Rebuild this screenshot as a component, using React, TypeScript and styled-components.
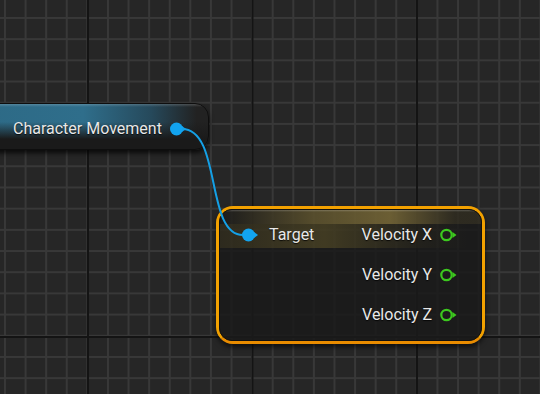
import styled, { createGlobalStyle } from "styled-components";

const GlobalStyle = createGlobalStyle`
  html, body {
    margin: 0;
    padding: 0;
    background: #262626;
  }
  body {
    font-family: Roboto, "Open Sans", "Liberation Sans", sans-serif;
  }
`;

// graph canvas with the minor / major grid lines
const Canvas = styled.div`
  position: relative;
  width: 540px;
  height: 394px;
  overflow: hidden;
  background-color: #262626;
  background-image:
    linear-gradient(to right, #141414 2px, transparent 2px),
    linear-gradient(to bottom, #141414 2px, transparent 2px),
    linear-gradient(to right, #383838 2px, transparent 2px),
    linear-gradient(to bottom, #383838 2px, transparent 2px);
  background-size: 164.5px 100%, 100% 1000px, 20.6px 100%, 100% 21.2px;
  background-position: 87px 0, 0 336px, 4px 0, 0 17px;
`;

const Label = styled.span`
  color: #e8e8e8;
  font-size: 16px;
  line-height: 20px;
  white-space: nowrap;
  text-shadow: 0 1px 1px rgba(0, 0, 0, 0.8);
`;

// the compact variable getter node
const VariableNode = styled.div`
  position: absolute;
  left: -20px;
  top: 103px;
  height: 47px;
  box-sizing: border-box;
  display: flex;
  align-items: center;
  gap: 8px;
  padding: 5px 21px 0 32px;
  border-radius: 14px;
  border: 1px solid #0e0e0e;
  background:
    linear-gradient(to bottom, rgba(255, 255, 255, 0.18) 0, rgba(255, 255, 255, 0) 3px),
    linear-gradient(to bottom, rgba(0, 0, 0, 0) 0, rgba(0, 0, 0, 0) 40%, #1a1a1a 78%),
    linear-gradient(to right, #2d6a86 0%, #2f6e8b 45%, #26495b 75%, #222 95%);
  box-shadow: 0 3px 5px rgba(0, 0, 0, 0.75);
`;

// selected function node, orange frame
const SelectedFrame = styled.div`
  position: absolute;
  left: 216px;
  top: 206px;
  width: 269px;
  box-sizing: border-box;
  border: 3px solid #f2a100;
  border-bottom-color: #e98c00;
  border-radius: 17px;
  box-shadow: inset 0 0 0 1px #5a3b00, 0 3px 5px rgba(0, 0, 0, 0.6);
`;

const NodeBody = styled.div`
  display: grid;
  grid-template-columns: auto auto;
  justify-content: space-between;
  row-gap: 20px;
  padding: 15px 24px 15px 22px;
  border-radius: 13px;
  border: 1px solid #111;
  box-sizing: border-box;
  background:
    linear-gradient(to bottom, rgba(255, 255, 255, 0.22) 0, rgba(255, 255, 255, 0) 2px),
    linear-gradient(to right, rgba(120, 105, 55, 0) 0%, rgba(140, 122, 60, 0.5) 35%, rgba(150, 130, 65, 0.65) 65%, rgba(120, 105, 55, 0.2) 90%) top / 100% 14px no-repeat,
    linear-gradient(to right, rgba(110, 95, 40, 0.22) 0%, rgba(120, 105, 45, 0.4) 40%, rgba(90, 80, 35, 0.12) 75%, rgba(0, 0, 0, 0) 95%) 0 14px / 100% 24px no-repeat,
    rgba(26, 26, 26, 0.85);
`;

const Pin = styled.div<{ $side: "in" | "out" }>`
  display: flex;
  align-items: center;
  justify-content: ${(p) => (p.$side === "in" ? "flex-start" : "flex-end")};
  gap: ${(p) => (p.$side === "in" ? "10px" : "8px")};
  height: 20px;
`;

const Empty = styled.div`
  height: 20px;
`;

const WireLayer = styled.svg`
  position: absolute;
  left: 0;
  top: 0;
  pointer-events: none;
`;

function ObjectPin() {
  return (
    <svg width="17" height="14" viewBox="0 0 17 14">
      <circle cx="6.5" cy="7" r="6.5" fill="#12a4f0" />
      <polygon points="12,4 16,7 12,10" fill="#12a4f0" />
    </svg>
  );
}

function FloatPin() {
  return (
    <svg width="17" height="14" viewBox="0 0 17 14">
      <circle cx="6.5" cy="7" r="5.2" fill="none" stroke="#3cc81e" strokeWidth="2.2" />
      <polygon points="12.5,4 16.5,7 12.5,10" fill="#3cc81e" />
    </svg>
  );
}

const outputs = ["Velocity X", "Velocity Y", "Velocity Z"];

export default function App() {
  return (
    <>
      <GlobalStyle />
      <Canvas>
        {/* Character Movement getter */}
        <VariableNode>
          <Label>Character Movement</Label>
          <ObjectPin />
        </VariableNode>

        {/* Break vector / get velocity node */}
        <SelectedFrame>
          <NodeBody>
            {outputs.map((name, i) => [
              i === 0 ? (
                <Pin $side="in" key={"in" + i}>
                  <ObjectPin />
                  <Label>Target</Label>
                </Pin>
              ) : (
                <Empty key={"in" + i} />
              ),
              <Pin $side="out" key={"out" + i}>
                <Label>{name}</Label>
                <FloatPin />
              </Pin>,
            ])}
          </NodeBody>
        </SelectedFrame>

        {/* wire from the component to Target */}
        <WireLayer width="540" height="394">
          <path
            d="M182 129 C 222 129, 205 235, 243 235"
            fill="none"
            stroke="#14a0e6"
            strokeWidth="2"
          />
        </WireLayer>
      </Canvas>
    </>
  );
}
